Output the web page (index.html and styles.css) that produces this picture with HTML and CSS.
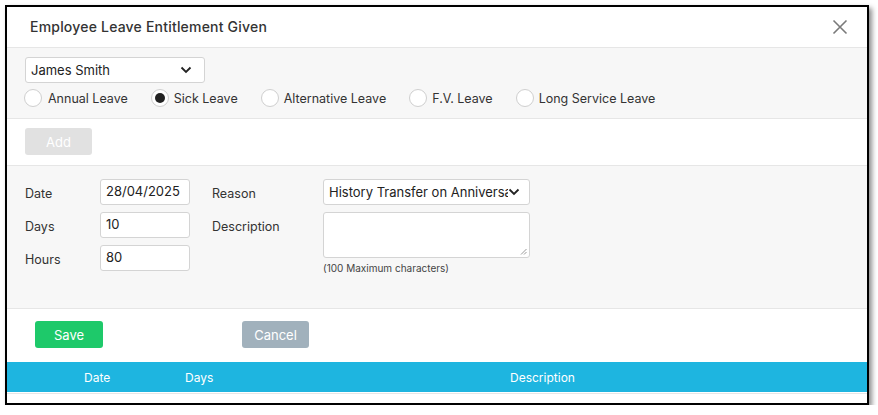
FILE: index.html
```html
<!DOCTYPE html>
<html>
<head>
<meta charset="utf-8">
<link rel="stylesheet" href="styles.css">
</head>
<body>
<div class="dialog">
  <div class="header">
    <span class="title">Employee Leave Entitlement Given</span>
    <svg class="close" width="16" height="16" viewBox="0 0 16 16"><path d="M1.5 1.5 L14.5 14.5 M14.5 1.5 L1.5 14.5" stroke="#7a7a7a" stroke-width="1.6" fill="none"/></svg>
  </div>
  <div class="sec gray top">
    <div class="select emp"><span class="sel-text">James Smith</span><svg class="chev" width="12" height="8" viewBox="0 0 12 8"><path d="M1.5 1.5 L6 6 L10.5 1.5" stroke="#222" stroke-width="1.8" fill="none"/></svg></div>
    <div class="radios">
      <label class="radio"><span class="circle"></span>Annual Leave</label>
      <label class="radio"><span class="circle on"></span>Sick Leave</label>
      <label class="radio"><span class="circle"></span>Alternative Leave</label>
      <label class="radio"><span class="circle"></span>F.V. Leave</label>
      <label class="radio"><span class="circle"></span>Long Service Leave</label>
    </div>
  </div>
  <div class="sec white addrow">
    <button class="btn add">Add</button>
  </div>
  <div class="sec gray form">
    <div class="col">
      <div class="row"><span class="lbl">Date</span><div class="input">28/04/2025</div></div>
      <div class="row"><span class="lbl">Days</span><div class="input">10</div></div>
      <div class="row"><span class="lbl">Hours</span><div class="input">80</div></div>
    </div>
    <div class="col col2">
      <div class="row"><span class="lbl lbl2">Reason</span><div class="select reason"><span class="sel-text clip">History Transfer on Anniversary</span><svg class="chev" width="12" height="8" viewBox="0 0 12 8"><path d="M1.5 1.5 L6 6 L10.5 1.5" stroke="#222" stroke-width="1.8" fill="none"/></svg></div></div>
      <div class="row top-al"><span class="lbl lbl2">Description</span>
        <div class="descwrap">
          <div class="textarea"><svg class="grip" width="7" height="7" viewBox="0 0 7 7"><path d="M6.5 1 L1 6.5 M6.5 4 L4 6.5" stroke="#999" stroke-width="1" fill="none"/></svg></div>
          <div class="hint">(100 Maximum characters)</div>
        </div>
      </div>
    </div>
  </div>
  <div class="sec white actions">
    <button class="btn save">Save</button>
    <button class="btn cancel">Cancel</button>
  </div>
  <div class="thead">
    <span class="th c1">Date</span>
    <span class="th c2">Days</span>
    <span class="th c3">Description</span>
  </div>
  <div class="tbody"></div>
</div>
</body>
</html>
```
FILE: styles.css
```css
* { box-sizing: border-box; }
html, body { margin: 0; padding: 0; background: #fff; }
body {
  font-family: Inter, "Noto Sans", sans-serif;
  font-size: 12.5px;
  color: #333;
  padding: 5px 0 0 5px;
}
.dialog {
  width: 864px;
  height: 400px;
  border: 2px solid #000;
  background: #fff;
  box-shadow: 3px 3px 5px rgba(0,0,0,0.45);
  display: flex;
  flex-direction: column;
  overflow: hidden;
}
.header {
  height: 41px;
  border-bottom: 1px solid #e6e6e6;
  display: flex;
  align-items: center;
  justify-content: space-between;
  padding: 0 19px 1px 23px;
}
.title { font-size: 14px; font-weight: 500; color: #333; letter-spacing: 0.2px; }
.close { display: block; }
.sec.gray { background: #f7f7f7; }
.sec.white { background: #fff; }
.top {
  height: 71px;
  border-bottom: 1px solid #e6e6e6;
  padding: 9px 0 0 18px;
  display: flex;
  flex-direction: column;
  gap: 6px;
}
.select {
  background: #fff;
  border: 1px solid #d4d4d4;
  border-radius: 3px;
  height: 26px;
  display: flex;
  align-items: center;
  padding: 0 12px 0 5px;
  color: #222;
}
.emp { width: 180px; justify-content: space-between; font-size: 13px; }
.radios { display: flex; gap: 23px; margin-left: -1px; font-size: 12.5px; }
.radio { display: flex; align-items: center; gap: 5px; color: #333; height: 18px; }
.radio:first-child { gap: 6px; }
.circle {
  width: 18px; height: 18px;
  border-radius: 50%;
  border: 1px solid #cfcfcf;
  background: #fff;
  display: flex; align-items: center; justify-content: center;
}
.circle.on::after {
  content: "";
  width: 10px; height: 10px; border-radius: 50%;
  background: #222;
}
.addrow {
  height: 47px;
  border-bottom: 1px solid #e6e6e6;
  padding: 9px 0 0 18px;
}
.btn {
  font-family: Inter, "Noto Sans", sans-serif;
  font-size: 13px;
  color: #fff;
  border: none;
  border-radius: 3px;
  height: 27px;
  padding: 0;
  display: block;
}
.add { width: 67px; background: #e1e1e1; }
.form {
  height: 143px;
  border-bottom: 1px solid #e6e6e6;
  padding: 13px 0 0 18px;
  display: flex;
  gap: 22px;
}
.col { display: flex; flex-direction: column; gap: 7px; }
.row { display: flex; align-items: center; }
.row.top-al { align-items: flex-start; }
.lbl { width: 75px; color: #333; padding-top: 2px; }
.top-al .lbl { padding-top: 7px; }
.lbl2 { width: 111px; }
.input {
  width: 90px; height: 26px;
  background: #fff;
  border: 1px solid #d4d4d4;
  border-radius: 3px;
  padding: 0 5px;
  display: flex; align-items: center;
  color: #222;
  font-size: 13px;
  padding-bottom: 2px;
}
.reason { width: 207px; padding: 0 9px 0 5px; gap: 0; font-size: 13px; }
.clip { width: 179px; overflow: hidden; white-space: nowrap; }
.descwrap { display: flex; flex-direction: column; }
.textarea {
  width: 207px; height: 46px;
  background: #fff;
  border: 1px solid #d4d4d4;
  border-radius: 3px;
  position: relative;
}
.grip { position: absolute; right: 2px; bottom: 2px; }
.hint { font-size: 10px; color: #444; margin-top: 4px; }
.actions {
  height: 53px;
  padding: 12px 0 0 28px;
  display: flex;
  gap: 139px;
}
.save { width: 68px; background: #1ec96a; }
.cancel { width: 67px; background: #a1b1bc; }
.thead {
  height: 30px;
  background: #1eb5e0;
  display: grid;
  grid-template-columns: 77px 101px 325px 1fr;
  align-items: center;
  color: #fff;
  font-size: 12px;
}
.c1 { grid-column: 2; }
.c2 { grid-column: 3; }
.c3 { grid-column: 4; }
.tbody { border-top: 1px solid #e6e6e6; flex: 1; margin-top: 1px; }
```
